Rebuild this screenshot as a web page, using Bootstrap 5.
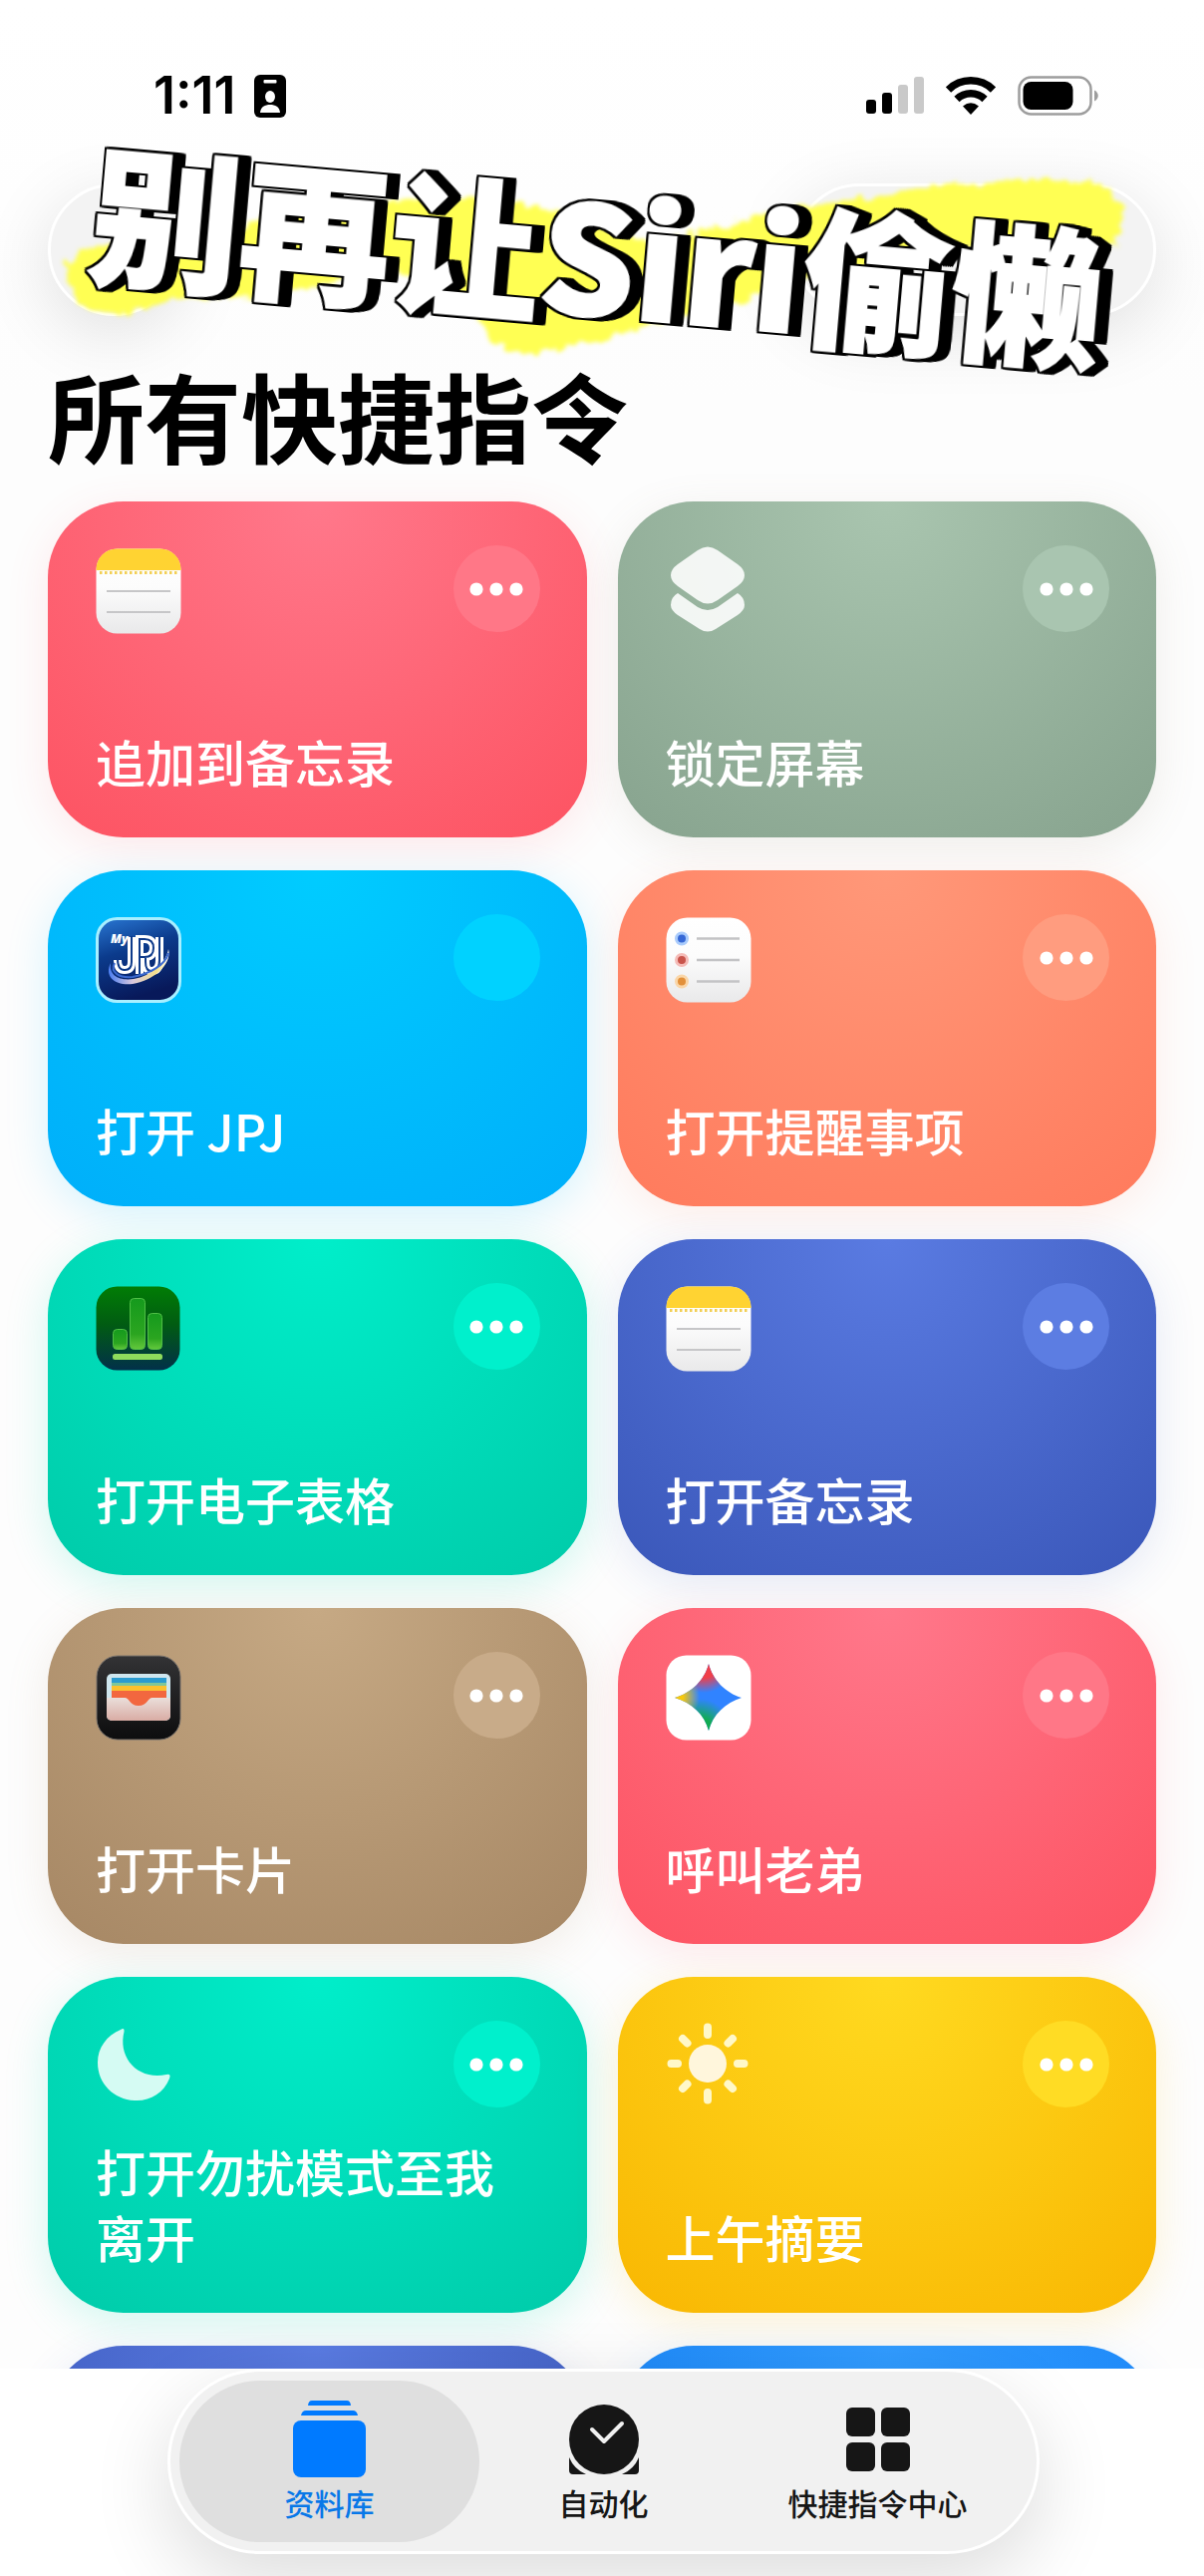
<!DOCTYPE html>
<html lang="zh-CN">
<head>
<meta charset="utf-8">
<meta name="viewport" content="width=device-width, initial-scale=1">
<title>所有快捷指令</title>
<link href="https://cdn.jsdelivr.net/npm/bootstrap@5.3.0/dist/css/bootstrap.min.css" rel="stylesheet">
<style>
  body { font-family: Inter, "Noto Sans CJK SC", sans-serif; background: #fff; color: #000; }
  .screen { position: relative; overflow: hidden; background: linear-gradient(#fff, #fdfdfd 400px, #fdfdfd); }

  /* status bar */
  .statusbar { height: 116px; padding: 68px 106px 0 154px; }
  .clock { font-size: 52px; line-height: 56px; font-weight: 600; }
  .clock-group { gap: 18px; }
  .status-icons { gap: 22px; }

  /* floating toolbar */
  .toolbar-row { padding: 68px 48px 0; }
  .glass { height: 133px; background: #f3f3f3; border: 3px solid #fff; border-radius: 67px; box-shadow: 0 16px 70px rgba(0,0,0,.12); }
  .glass-round { width: 133px; }
  .glass-pill { width: 364px; }

  /* sticker headline lying over the toolbar */
  .sticker { position: absolute; left: 0; top: 0; width: 100%; height: 400px; pointer-events: none; }
  .sticker svg { position: absolute; left: 0; top: 0; }
  .sticker-text {
    position: absolute; left: 90px; top: 131px; white-space: nowrap; margin: 0;
    font-family: "Noto Sans CJK SC", sans-serif; font-weight: 900; font-style: oblique 16deg;
    font-size: 151px; line-height: 240px; color: #fff;
    -webkit-text-stroke: 2px #fff; transform: rotate(5deg);
    filter: drop-shadow(2px 0 0 #000) drop-shadow(-2px 0 0 #000) drop-shadow(0 2px 0 #000) drop-shadow(0 -2px 0 #000) drop-shadow(4px 0 0 #000) drop-shadow(7px 0 0 #000);
  }

  .page-title { font-size: 97px; line-height: 116px; font-weight: 700; padding: 47px 48px 0; margin: 0 0 23px; }

  .shortcut-grid { padding: 0 48px; }
  .shortcut-grid > .row { --bs-gutter-x: 31px; --bs-gutter-y: 33px; }

  .shortcut {
    height: 337px; border-radius: 76px; padding: 44px 47px 44px 48px; color: #fff;
    background: radial-gradient(circle at 50% 0, var(--hi), var(--lo) 420px);
    box-shadow: 0 10px 44px var(--glow);
  }
  .shortcut h2 { font-family: "Noto Sans CJK SC", sans-serif; font-size: 50px; line-height: 66px; font-weight: 500; margin: 0; }
  .shortcut svg { display: block; overflow: visible; }
  .app-icon { margin-top: 3px; width: 86px; height: 86px; }
  .more { width: 87px; height: 87px; border: 0; border-radius: 50%; padding: 0; background: var(--btn); }
  .more svg { margin: auto; }

  .c-pink   { --hi: #ff788b; --lo: #fd5463; --btn: #ff7787; --glow: rgba(253,84,99,.12); }
  .c-sage   { --hi: #a9c5af; --lo: #88a48f; --btn: #a9c5b0; --glow: rgba(136,120,100,.12); }
  .c-sky    { --hi: #00ccff; --lo: #00affa; --btn: #00d2ff; --glow: rgba(0,190,255,.16); }
  .c-coral  { --hi: #ff9879; --lo: #ff7b5d; --btn: #ff9c7f; --glow: rgba(255,123,93,.12); }
  .c-mint   { --hi: #00eeca; --lo: #00ccaa; --btn: #00f0cc; --glow: rgba(0,220,180,.18); }
  .c-indigo { --hi: #5a7be2; --lo: #3b58ba; --btn: #5c7de2; --glow: rgba(60,90,190,.12); }
  .c-tan    { --hi: #c6a984; --lo: #a78865; --btn: #c8ab89; --glow: rgba(167,136,101,.14); }
  .c-gold   { --hi: #ffda20; --lo: #f9b803; --btn: #ffdc24; --glow: rgba(250,184,3,.16); }
  .c-azure  { --hi: #319cff; --lo: #1580f5; --btn: #4aa9ff; --glow: rgba(21,128,245,.1); }

  /* tab bar */
  .tabbar-wrap { padding: 0 165px 22px 168px; background: #fff; position: relative; }
  .tabbar { height: 186px; border: 3px solid #fff; border-radius: 93px; background: #f1f1f1; padding: 9px 22px; box-shadow: 0 26px 80px rgba(0,0,0,.14); }
  .tab { position: relative; flex: 1 1 0; color: #161616; text-decoration: none; font-size: 30px; line-height: 40px; font-weight: 500; padding-top: 17px; }
  .tab svg { position: relative; }
  .tab span { position: relative; margin-top: 7px; }
  .tab.active { color: #0878e8; }
  .tab.active::before { content: ""; position: absolute; inset: 0 -13px; border-radius: 81px; background: #dfdfdf; }
</style>
</head>
<body>
<svg width="0" height="0" class="position-absolute" aria-hidden="true">
  <defs>
    <linearGradient id="paper" x1="0" y1="0" x2="0" y2="1"><stop offset="0" stop-color="#fff"/><stop offset=".45" stop-color="#fcfcfc"/><stop offset="1" stop-color="#e9e9ea"/></linearGradient>
    <linearGradient id="navy" x1="0" y1="0" x2=".3" y2="1"><stop offset="0" stop-color="#2a78d4"/><stop offset=".45" stop-color="#0b3b8c"/><stop offset="1" stop-color="#08195a"/></linearGradient>
    <linearGradient id="forest" x1="0" y1="0" x2="0" y2="1"><stop offset="0" stop-color="#017d05"/><stop offset=".45" stop-color="#015c12"/><stop offset="1" stop-color="#02304a"/></linearGradient>
    <linearGradient id="leaf" x1="0" y1="0" x2="0" y2="1"><stop offset="0" stop-color="#159a1d"/><stop offset=".7" stop-color="#2ba520"/><stop offset="1" stop-color="#63c83c"/></linearGradient>
    <linearGradient id="coal" x1="0" y1="0" x2="0" y2="1"><stop offset="0" stop-color="#333335"/><stop offset="1" stop-color="#0d0d0e"/></linearGradient>
    <linearGradient id="pocket" x1="0" y1="0" x2="0" y2="1"><stop offset="0" stop-color="#eadfdb"/><stop offset="1" stop-color="#d9aca4"/></linearGradient>
    <linearGradient id="swoosh" x1="0" y1="0" x2="1" y2="0"><stop offset="0" stop-color="#4a7df0"/><stop offset=".4" stop-color="#d9c8dd"/><stop offset=".8" stop-color="#f5e08a"/><stop offset="1" stop-color="#fff"/></linearGradient>
    <radialGradient id="g-red" gradientUnits="userSpaceOnUse" cx="38" cy="8" r="30"><stop offset=".5" stop-color="#f03f4a"/><stop offset="1" stop-color="#f03f4a" stop-opacity="0"/></radialGradient>
    <radialGradient id="g-yellow" gradientUnits="userSpaceOnUse" cx="8" cy="42" r="26"><stop offset=".35" stop-color="#f8c90a"/><stop offset="1" stop-color="#f8c90a" stop-opacity="0"/></radialGradient>
    <radialGradient id="g-green" gradientUnits="userSpaceOnUse" cx="34" cy="76" r="32"><stop offset=".4" stop-color="#12ac52"/><stop offset="1" stop-color="#12ac52" stop-opacity="0"/></radialGradient>
    <symbol id="dots" viewBox="0 0 54 14"><circle cx="7" cy="7" r="6.6" fill="#fff"/><circle cx="27" cy="7" r="6.6" fill="#fff"/><circle cx="47" cy="7" r="6.6" fill="#fff"/></symbol>
    <symbol id="notes" viewBox="0 0 86 86">
      <rect x=".5" y=".5" width="85" height="85" rx="21" fill="url(#paper)"/>
      <path d="M.5 22V21A20.500 20.500 0 0 1 21 .5H65A20.500 20.500 0 0 1 85.500 21V22Z" fill="#ffd332"/>
      <path d="M4 24.500H83" stroke="#f2cf55" stroke-width="3" stroke-dasharray="2.500 2.500"/>
      <path d="M11 43H75M11 64H75" stroke="#c6c6c8" stroke-width="2"/>
    </symbol>
  </defs>
</svg>

<div class="screen vh-100 d-flex flex-column">
  <main class="flex-fill overflow-hidden">
    <div class="statusbar d-flex justify-content-between align-items-start">
      <div class="clock-group d-flex align-items-center">
        <span class="clock">1:11</span>
        <svg width="32" height="43" viewBox="0 0 32 43" aria-hidden="true"><rect width="32" height="43" rx="6"/><rect x="9.500" y="5" width="13" height="3.500" rx="1" fill="#fff"/><ellipse cx="16" cy="22" rx="5" ry="6" fill="#fff"/><path d="M6 38C6.500 32 11 30 16 30S25.500 32 26 38Z" fill="#fff"/></svg>
      </div>
      <div class="status-icons d-flex align-items-center pt-2">
        <svg width="58" height="38" viewBox="0 0 58 38" aria-hidden="true"><rect y="23" width="10" height="14" rx="3"/><rect x="16" y="16" width="10" height="21" rx="3"/><rect x="32" y="8" width="10" height="29" rx="3" fill="#c9c9c9"/><rect x="48" width="10" height="37" rx="3" fill="#c9c9c9"/></svg>
        <svg width="50" height="38" viewBox="0 0 50 38" aria-hidden="true" fill="none" stroke="#000" stroke-width="7.500"><path d="M2.500 13A32 32 0 0 1 47.500 13"/><path d="M11 22.500A20 20 0 0 1 39 22.500"/><path d="M25 38L17 29.500Q25 23 33 29.500Z" fill="#000" stroke="none"/></svg>
        <svg width="81" height="40" viewBox="0 0 81 40" aria-hidden="true"><rect x="1.500" y="1.500" width="72" height="37" rx="12" fill="none" stroke="#9d9d9d" stroke-width="2.500"/><rect x="5.500" y="6" width="50" height="28" rx="8"/><path d="M77 14.500C82 17 82 23 77 25.500Z" fill="#9d9d9d"/></svg>
      </div>
    </div>

    <div class="toolbar-row d-flex justify-content-between">
      <div class="glass glass-round"></div>
      <div class="glass glass-pill"></div>
    </div>

    <div class="sticker">
      <svg width="1208" height="400" viewBox="0 0 1208 400" aria-hidden="true">
        <defs><filter id="rough" x="-5%" y="-10%" width="110%" height="120%"><feTurbulence type="fractalNoise" baseFrequency=".09" numOctaves="3" seed="4"/><feDisplacementMap in="SourceGraphic" scale="16" xChannelSelector="R" yChannelSelector="G"/><feGaussianBlur stdDeviation="2"/></filter></defs>
        <path filter="url(#rough)" fill="#ffff52" d="M64 262L78 306L108 316L135 312L185 298L246 299L316 288L400 270L474 315L500 346L528 355L604 341L654 325L746 302L800 280L975 250L1118 248L1130 215L1110 188L1085 180L989 183L935 187L874 199L812 205L720 228L650 244L551 210L497 199L416 198L330 215L266 212L240 235L100 245Z"/>
      </svg>
      <p class="sticker-text">别再让Siri偷懒</p>
    </div>

    <h1 class="page-title">所有快捷指令</h1>

    <div class="shortcut-grid">
      <div class="row row-cols-2">
        <div class="col"><section class="shortcut c-pink d-flex flex-column justify-content-between">
          <div class="d-flex justify-content-between align-items-start">
            <svg class="app-icon" aria-hidden="true"><use href="#notes"/></svg>
            <button class="more" type="button" aria-label="更多"><svg width="54" height="14"><use href="#dots"/></svg></button>
          </div>
          <h2>追加到备忘录</h2>
        </section></div>

        <div class="col"><section class="shortcut c-sage d-flex flex-column justify-content-between">
          <div class="d-flex justify-content-between align-items-start">
            <svg class="app-icon" viewBox="0 0 86 86" aria-hidden="true" fill="#fff" fill-opacity=".88"><path d="M32 2Q42 -5 52 2L72 16Q79 21 79 27T72 38L52 52Q42 59 32 52L12 38Q5 33 5 27T12 16Z"/><path d="M12 45L32 59Q42 65 52 59L72 45Q79 49 79 57Q79 62 72 67L50 81Q42 86 34 81L12 67Q5 62 5 57Q5 49 12 45Z"/></svg>
            <button class="more" type="button" aria-label="更多"><svg width="54" height="14"><use href="#dots"/></svg></button>
          </div>
          <h2>锁定屏幕</h2>
        </section></div>

        <div class="col"><section class="shortcut c-sky d-flex flex-column justify-content-between">
          <div class="d-flex justify-content-between align-items-start">
            <svg class="app-icon" viewBox="0 0 86 86" aria-hidden="true"><rect x="1.500" y="1.500" width="83" height="83" rx="20" fill="url(#navy)" stroke="#a8efff" stroke-width="3"/>
              <text x="15" y="26" font-family="Open Sans, sans-serif" font-size="12" font-weight="800" font-style="italic" fill="#fff">My</text>
              <g fill="none"><path d="M36 20V45Q36 53 29 53Q22 53 22 43M44 57V22H49Q58 22 58 31T49 40H44M50 41V45Q50 54 56 54Q64 54 64 43V20" stroke="#fff" stroke-width="8"/><path d="M36 19V45Q36 53 29 53Q22 53 22 42M44 58V22H49Q58 22 58 31T49 40H44M50 41V45Q50 54 56 54Q64 54 64 43V19" stroke="#0d3a8a" stroke-width="2"/></g>
              <path d="M15 46C8 60 20 69 37 67C57 64 77 48 73 32C71 45 56 59 38 62C24 64 13 59 15 46Z" fill="url(#swoosh)"/><path d="M19 46C14 56 24 61 37 60C54 57 70 48 73 36" fill="none" stroke="#3b69cf" stroke-width="2"/></svg>
            <button class="more" type="button" aria-label="更多"></button>
          </div>
          <h2>打开 JPJ</h2>
        </section></div>

        <div class="col"><section class="shortcut c-coral d-flex flex-column justify-content-between">
          <div class="d-flex justify-content-between align-items-start">
            <svg class="app-icon" viewBox="0 0 86 86" aria-hidden="true"><rect x=".5" y=".5" width="85" height="85" rx="21" fill="url(#paper)"/><g stroke-width="3"><circle cx="16" cy="21.500" r="5.500" fill="#3668d6" stroke="#a9cbfb"/><circle cx="16" cy="43" r="5.500" fill="#c9544b" stroke="#f5bcb8"/><circle cx="16" cy="64.500" r="5.500" fill="#e2903a" stroke="#fad6a8"/></g><path d="M31 21.500H74M31 43H74M31 64.500H74" stroke="#c3c3c5" stroke-width="2.500"/></svg>
            <button class="more" type="button" aria-label="更多"><svg width="54" height="14"><use href="#dots"/></svg></button>
          </div>
          <h2>打开提醒事项</h2>
        </section></div>

        <div class="col"><section class="shortcut c-mint d-flex flex-column justify-content-between">
          <div class="d-flex justify-content-between align-items-start">
            <svg class="app-icon" viewBox="0 0 86 86" aria-hidden="true"><rect x=".5" y=".5" width="84" height="84" rx="21" fill="url(#forest)"/><g fill="url(#leaf)" stroke="#4fbf45" stroke-width="1"><rect x="17.500" y="43.500" width="14" height="20" rx="4"/><rect x="34.500" y="12.500" width="15" height="51" rx="4"/><rect x="52.500" y="27.500" width="14" height="36" rx="4"/></g><rect x="17" y="68" width="50" height="6" rx="2.500" fill="#8fdc5c"/></svg>
            <button class="more" type="button" aria-label="更多"><svg width="54" height="14"><use href="#dots"/></svg></button>
          </div>
          <h2>打开电子表格</h2>
        </section></div>

        <div class="col"><section class="shortcut c-indigo d-flex flex-column justify-content-between">
          <div class="d-flex justify-content-between align-items-start">
            <svg class="app-icon" aria-hidden="true"><use href="#notes"/></svg>
            <button class="more" type="button" aria-label="更多"><svg width="54" height="14"><use href="#dots"/></svg></button>
          </div>
          <h2>打开备忘录</h2>
        </section></div>

        <div class="col"><section class="shortcut c-tan d-flex flex-column justify-content-between">
          <div class="d-flex justify-content-between align-items-start">
            <svg class="app-icon" viewBox="0 0 86 86" aria-hidden="true"><rect x="1" y="1" width="84" height="84" rx="21" fill="url(#coal)" stroke="#77716c" stroke-width="1"/><rect x="11" y="19" width="64" height="47" rx="5" fill="#cfe6ee"/><path d="M16 23H71V29H16Z" fill="#2b9cd0"/><path d="M16 28H71V31H16Z" fill="#7fc79a"/><path d="M16 31H71V37H16Z" fill="#fcc12e"/><path d="M16 36H71V52H16Z" fill="#f2673f"/><path d="M11 43H29C34 43 34 51 43 51S52 43 57 43H75V61A5 5 0 0 1 70 66H16A5 5 0 0 1 11 61Z" fill="url(#pocket)"/></svg>
            <button class="more" type="button" aria-label="更多"><svg width="54" height="14"><use href="#dots"/></svg></button>
          </div>
          <h2>打开卡片</h2>
        </section></div>

        <div class="col"><section class="shortcut c-pink d-flex flex-column justify-content-between">
          <div class="d-flex justify-content-between align-items-start">
            <svg class="app-icon" viewBox="0 0 86 86" aria-hidden="true"><rect x=".5" y=".5" width="85" height="85" rx="20" fill="#fff"/><path d="M43 9C47 25 60 38 76 43C60 48 47 60 43 76C39 60 26 48 9 43C26 38 39 25 43 9Z" fill="#3083ff"/><path d="M43 9C47 25 60 38 76 43C60 48 47 60 43 76C39 60 26 48 9 43C26 38 39 25 43 9Z" fill="url(#g-green)"/><path d="M43 9C47 25 60 38 76 43C60 48 47 60 43 76C39 60 26 48 9 43C26 38 39 25 43 9Z" fill="url(#g-red)"/><path d="M43 9C47 25 60 38 76 43C60 48 47 60 43 76C39 60 26 48 9 43C26 38 39 25 43 9Z" fill="url(#g-yellow)"/></svg>
            <button class="more" type="button" aria-label="更多"><svg width="54" height="14"><use href="#dots"/></svg></button>
          </div>
          <h2>呼叫老弟</h2>
        </section></div>

        <div class="col"><section class="shortcut c-mint d-flex flex-column justify-content-between">
          <div class="d-flex justify-content-between align-items-start">
            <svg class="app-icon" viewBox="0 0 86 86" aria-hidden="true"><path d="M25 6Q29 3 28.500 8C22 34 42 57 71 51Q76 50 74 55C68 70 54 78 39 77C18 76 2 60 2 39C2 24 11 12 25 6Z" fill="#d5fbf3"/></svg>
            <button class="more" type="button" aria-label="更多"><svg width="54" height="14"><use href="#dots"/></svg></button>
          </div>
          <h2>打开勿扰模式至我离开</h2>
        </section></div>

        <div class="col"><section class="shortcut c-gold d-flex flex-column justify-content-between">
          <div class="d-flex justify-content-between align-items-start">
            <svg class="app-icon" viewBox="0 0 86 86" aria-hidden="true"><circle cx="42" cy="40" r="19" fill="#fff6dc"/><path d="M42 3.500V11M42 69V76.500M5.500 40H12M72 40H78.500M17 15L21.500 19.500M62.500 60.500L67 65M17 65L21.500 60.500M62.500 19.500L67 15" stroke="#fff8c8" stroke-width="8" stroke-linecap="round"/></svg>
            <button class="more" type="button" aria-label="更多"><svg width="54" height="14"><use href="#dots"/></svg></button>
          </div>
          <h2>上午摘要</h2>
        </section></div>

        <div class="col"><section class="shortcut c-indigo"></section></div>
        <div class="col"><section class="shortcut c-azure"></section></div>
      </div>
    </div>
  </main>

  <div class="tabbar-wrap">
    <nav class="tabbar d-flex" aria-label="标签栏">
      <a class="tab active d-flex flex-column align-items-center" href="#" aria-current="page">
        <svg width="73" height="80" viewBox="0 0 73 80" fill="#007aff" aria-hidden="true"><path d="M15 8Q15.500 3 19 3H54Q57.500 3 58 8ZM8 18Q9 13 13 13H60Q64 13 65 18Z"/><rect y="23" width="73" height="57" rx="8"/></svg>
        <span>资料库</span>
      </a>
      <a class="tab d-flex flex-column align-items-center" href="#">
        <svg width="72" height="80" viewBox="0 0 72 80" fill="#161616" aria-hidden="true"><path d="M1 60Q6 72 18 77H5Q1 77 1 73ZM71 60Q66 72 54 77H67Q71 77 71 73Z"/><circle cx="36" cy="42" r="35"/><path d="M24 32L36 44L54 26" fill="none" stroke="#f1f1f1" stroke-width="4" stroke-linecap="round" stroke-linejoin="round"/></svg>
        <span>自动化</span>
      </a>
      <a class="tab d-flex flex-column align-items-center" href="#">
        <svg width="64" height="80" viewBox="0 0 64 80" fill="#161616" aria-hidden="true"><rect y="10" width="29" height="29" rx="6"/><rect x="35" y="10" width="29" height="29" rx="6"/><rect y="45" width="29" height="29" rx="6"/><rect x="35" y="45" width="29" height="29" rx="6"/></svg>
        <span>快捷指令中心</span>
      </a>
    </nav>
  </div>
</div>
<script src="https://cdn.jsdelivr.net/npm/bootstrap@5.3.0/dist/js/bootstrap.bundle.min.js"></script>
</body>
</html>
